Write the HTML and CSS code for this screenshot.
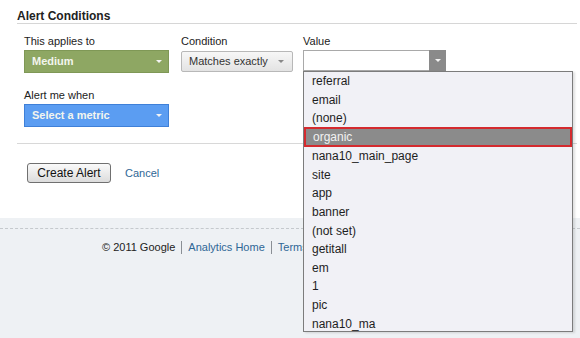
FILE: index.html
```html
<!DOCTYPE html>
<html lang="en">
<head>
    <meta charset="UTF-8">
    <title>Alert Conditions</title>
    <link rel="stylesheet" href="styles.css">
</head>
<body>
    <div class="page">
        <h2 class="title">Alert Conditions</h2>
        <div class="fields">
            <div class="fieldRow">
                <div class="field fieldFirst">
                    <label class="fieldLabel">This applies to</label>
                    <div class="pick pickGreen">Medium <span class="arrow"></span></div>
                </div>
                <div class="field fieldSecond">
                    <label class="fieldLabel">Condition</label>
                    <div class="pick pickGray">Matches exactly <span class="arrow arrowGray"></span></div>
                </div>
                <div class="field">
                    <label class="fieldLabel">Value</label>
                    <div class="valueBox">
                        <div class="valueInput"><span class="valueBtn"><span class="arrow"></span></span></div>
                        <ul class="valueList">
                            <li>referral</li>
                            <li>email</li>
                            <li>(none)</li>
                            <li class="selected">organic</li>
                            <li>nana10_main_page</li>
                            <li>site</li>
                            <li>app</li>
                            <li>banner</li>
                            <li>(not set)</li>
                            <li>getitall</li>
                            <li>em</li>
                            <li>1</li>
                            <li>pic</li>
                            <li>nana10_ma</li>
                        </ul>
                    </div>
                </div>
            </div>
            <div class="fieldRow fieldRowNext">
                <div class="field">
                    <label class="fieldLabel">Alert me when</label>
                    <div class="pick pickBlue">Select a metric <span class="arrow"></span></div>
                </div>
            </div>
        </div>
        <div class="actions">
            <button class="createBtn" type="button">Create Alert</button>
            <a class="cancel" href="#">Cancel</a>
        </div>
    </div>
    <div class="footer">
        <span>&copy; 2011 Google</span>
        <a class="footLink" href="#">Analytics Home</a>
        <a class="footLink" href="#">Terms of Service</a>
    </div>
</body>
</html>
```
FILE: styles.css
```css
html, body {
    height: 100%;
}
body {
    margin: 0;
    font-family: 'Liberation Sans', Arial, sans-serif;
    font-size: 11px;
    color: #222;
    background: #eef1f4;
}
.page {
    background: white;
    height: 218px;
    padding: 0 3px 0 17px;
    box-sizing: border-box;
}
.title {
    margin: 0;
    padding-top: 9px;
    font-size: 12px;
    line-height: 14px;
    font-weight: bold;
    border-bottom: 1px solid #d6d6d6;
}
.fields {
    padding: 11px 0 16px 7px;
    border-bottom: 1px solid #d8d8d8;
}
.fieldRow {
    display: flex;
    align-items: flex-start;
}
.fieldRowNext {
    margin-top: 16px;
}
.field {
    display: flex;
    flex-direction: column;
    align-items: flex-start;
}
.fieldFirst {
    width: 157px;
}
.fieldSecond {
    width: 122px;
}
.fieldLabel {
    line-height: 13px;
    margin-bottom: 2px;
}
.pick {
    position: relative;
    box-sizing: border-box;
    height: 23px;
    line-height: 21px;
    padding-left: 7px;
    font-weight: bold;
    color: #f3f5ee;
}
.pickGreen {
    width: 145px;
    background: #8ea763;
    border: 1px solid #7f9856;
}
.pickBlue {
    width: 145px;
    background: #5b9df2;
    border: 1px solid #3f80d8;
}
.pickGray {
    width: 112px;
    height: 21px;
    line-height: 19px;
    margin-top: 1px;
    font-weight: normal;
    color: #333;
    background: linear-gradient(#f7f7f7, #e3e3e3);
    border: 1px solid #b8b8b8;
    border-radius: 2px;
}
.arrow {
    position: absolute;
    top: 9px;
    right: 6px;
    border-left: 3px solid transparent;
    border-right: 3px solid transparent;
    border-top: 3px solid #f4f4f4;
}
.arrowGray {
    top: 8px;
    right: 8px;
    border-top-color: #888;
}
.valueBox {
    position: relative;
}
.valueInput {
    box-sizing: border-box;
    width: 143px;
    height: 21px;
    background: white;
    border: 1px solid #a9a9a9;
    position: relative;
}
.valueBtn {
    position: absolute;
    top: -1px;
    right: -1px;
    width: 17px;
    height: 21px;
    background: #8a8a8a;
}
.valueBtn .arrow {
    top: 9px;
    right: 5px;
}
.valueList {
    position: absolute;
    top: 21px;
    left: 0;
    z-index: 2;
    width: 270px;
    height: 261px;
    box-sizing: border-box;
    margin: 0;
    padding: 0;
    list-style: none;
    background: #f1f1f6;
    border: 1px solid #7c7c7c;
    box-shadow: 2px 1px 2px rgba(0, 0, 0, 0.12);
    font-size: 12px;
    overflow: hidden;
}
.valueList li {
    height: 18.6px;
    line-height: 18.6px;
    padding-left: 8px;
    color: #1e1e1e;
}
.valueList .selected {
    box-sizing: border-box;
    margin-top: -0.5px;
    height: 20px;
    line-height: 16px;
    padding-left: 7px;
    background: #8b8b8b;
    border: 2px solid #d42a2e;
    color: #f2f2f2;
}
.actions {
    display: flex;
    align-items: center;
    padding: 19px 0 0 10px;
}
.createBtn {
    width: 84px;
    height: 20px;
    padding: 0;
    font-family: 'Liberation Sans', Arial, sans-serif;
    font-size: 12px;
    color: #111;
    background: linear-gradient(#fafafa, #dcdcdc);
    border: 1px solid #707070;
    border-radius: 3px;
}
.cancel {
    margin-left: 14px;
    color: #2f6796;
    text-decoration: none;
}
.footer {
    margin-top: 10px;
    border-top: 1px dashed #c5c9cd;
    padding: 12px 0 0 102px;
    line-height: 13px;
    color: #222;
    display: flex;
    white-space: nowrap;
}
.footLink {
    color: #2f6796;
    text-decoration: none;
    border-left: 1px solid #8a8f95;
    margin-left: 6px;
    padding-left: 6px;
}
```
